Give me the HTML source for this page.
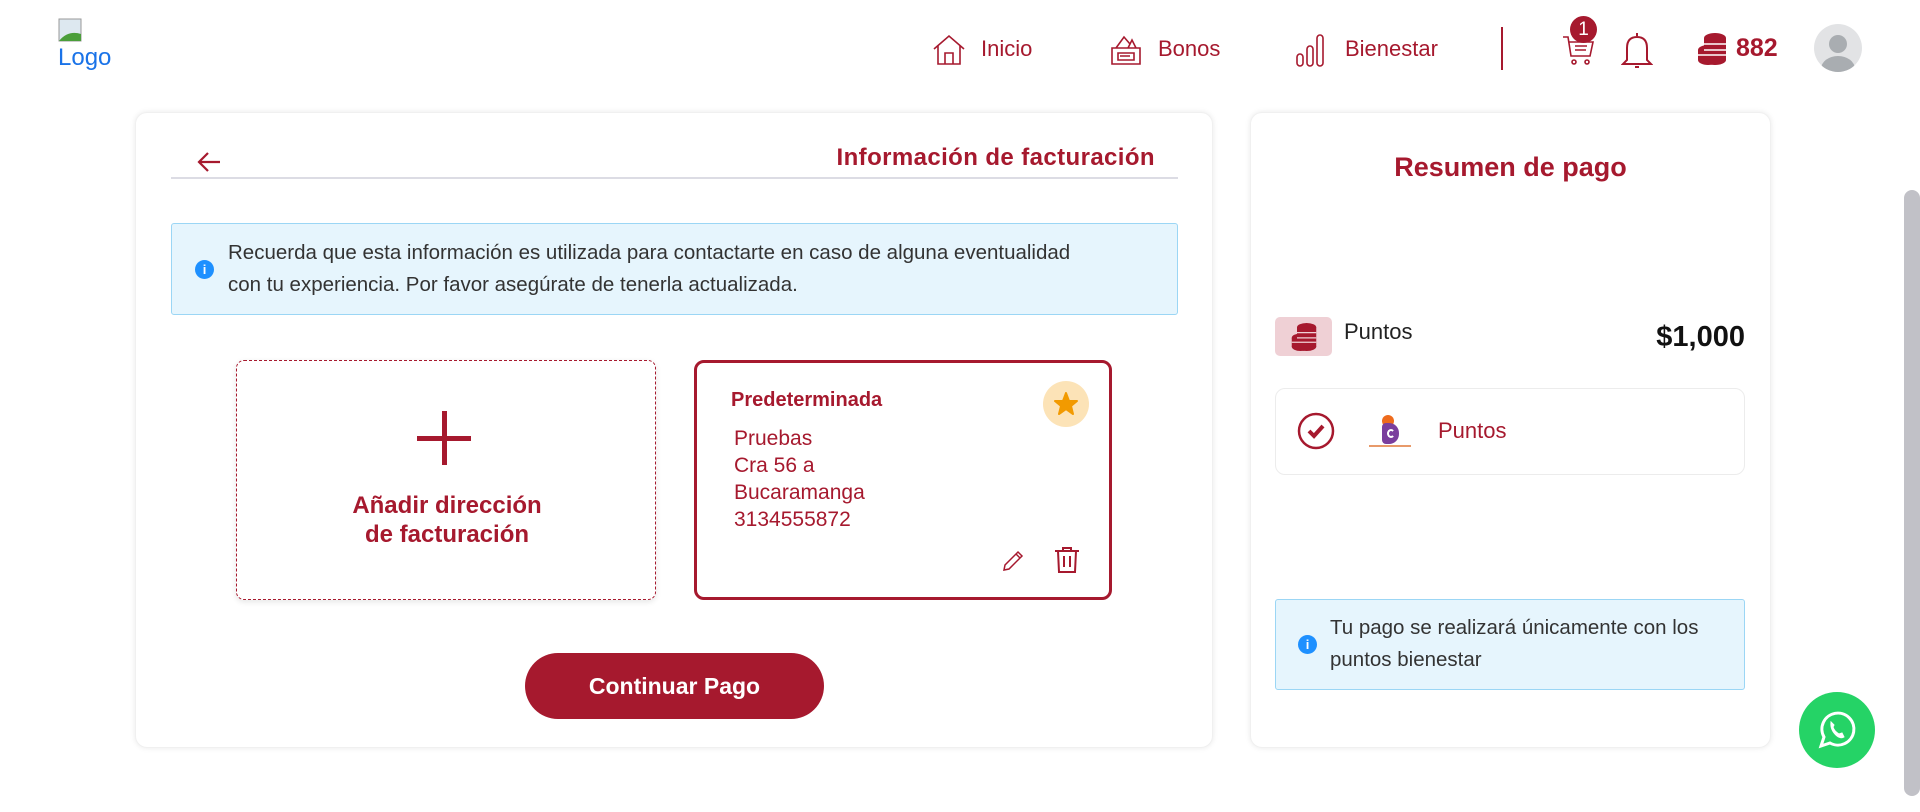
<!DOCTYPE html>
<html><head><meta charset="utf-8"><style>
*{box-sizing:border-box;margin:0;padding:0}
body{width:1920px;height:812px;overflow:hidden;background:#fff;font-family:"Liberation Sans",sans-serif;color:#a6192e;position:relative}
.a{position:absolute}
.card{position:absolute;background:#fff;border-radius:12px;box-shadow:0 0 6px rgba(0,0,0,.09);border:1px solid #f0f0f0}
.nav{font-size:22px;color:#a6192e}
.info{position:absolute;background:#e6f5fd;border:1px solid #9bd6f5;border-radius:3px;color:#333;font-size:20.5px;line-height:32px}
.ii{position:absolute;width:19px;height:19px;border-radius:50%;background:#1e90ff;color:#fff;font-size:13px;font-weight:bold;text-align:center;line-height:19px}
</style></head><body>
<svg class="a" style="left:58px;top:18px" width="24" height="24"><rect x="1" y="1" width="22" height="22" fill="#dde8f0" stroke="#999"/><path d="M1 23 Q10 12 23 16 V23Z" fill="#4a9e3a"/></svg>
<div class="a" style="left:58px;top:44px;font-size:24px;color:#1a73e8">Logo</div>

<svg class="a" style="left:932px;top:33px" width="34" height="34" viewBox="0 0 34 34" fill="none" stroke="#a6192e" stroke-width="1.6"><path d="M2 16 L17 3 L32 16 M6 13 V31 H28 V13 M13 31 V20 H21 V31"/></svg>
<div class="a nav" style="left:981px;top:36px">Inicio</div>
<svg class="a" style="left:1108px;top:34px" width="36" height="32" viewBox="0 0 36 32" fill="none" stroke="#a6192e" stroke-width="1.6"><path d="M4 14 H32 V30 H4Z M10 19 H26 V26 H10Z M12 22 H22 M8 14 L16 3 L22 10 M20 14 L24 6 L28 14"/></svg>
<div class="a nav" style="left:1158px;top:36px">Bonos</div>
<svg class="a" style="left:1295px;top:32px" width="32" height="36" viewBox="0 0 32 36" fill="none" stroke="#a6192e" stroke-width="1.6"><rect x="2" y="22" width="6" height="12" rx="3"/><rect x="12" y="14" width="6" height="20" rx="3"/><rect x="22" y="3" width="6" height="31" rx="3"/></svg>
<div class="a nav" style="left:1345px;top:36px">Bienestar</div>
<div class="a" style="left:1501px;top:27px;width:2px;height:43px;background:#a6192e"></div>
<svg class="a" style="left:1562px;top:34px" width="34" height="32" viewBox="0 0 34 32" fill="none" stroke="#a6192e" stroke-width="1.6"><path d="M1 3 H6 L9 22 H28 L31 8 H7 M13 12 H25 M13 16 H24"/><circle cx="12" cy="28" r="2"/><circle cx="25" cy="28" r="2"/></svg>
<div class="a" style="left:1570px;top:16px;width:27px;height:27px;border-radius:50%;background:#a6192e;color:#fff;font-size:19px;text-align:center;line-height:27px">1</div>
<svg class="a" style="left:1621px;top:30px" width="32" height="40" viewBox="0 0 32 40" fill="none" stroke="#a6192e" stroke-width="2"><path d="M16 3 V6 M6 30 V18 Q6 7 16 7 Q26 7 26 18 V30 L30 34 H2 L6 30Z M14 37 H18"/></svg>
<svg class="a" style="left:1696px;top:32px" width="32" height="34" viewBox="0 0 32 34" fill="#a6192e"><ellipse cx="19" cy="6" rx="11" ry="5"/><rect x="8" y="6" width="22" height="22"/><ellipse cx="19" cy="28" rx="11" ry="5"/><ellipse cx="12" cy="18" rx="10" ry="5"/><rect x="2" y="18" width="20" height="10"/><ellipse cx="12" cy="28" rx="10" ry="5"/><path d="M8 12 H30 M8 18 H30 M2 23 H30" stroke="#fff" stroke-width="1.5"/></svg>
<div class="a" style="left:1736px;top:34px;font-size:25px;font-weight:bold">882</div>
<div class="a" style="left:1814px;top:24px;width:48px;height:48px;border-radius:50%;background:#e2e3e5;overflow:hidden"><div class="a" style="left:15px;top:11px;width:18px;height:18px;border-radius:50%;background:#a9adb1"></div><div class="a" style="left:7px;top:32px;width:34px;height:26px;border-radius:50%;background:#a9adb1"></div></div>

<div class="card" style="left:135px;top:112px;width:1078px;height:636px"></div>
<svg class="a" style="left:196px;top:150px" width="26" height="24" viewBox="0 0 26 24" fill="none" stroke="#a6192e" stroke-width="2.2"><path d="M24 12 H3 M12 3 L3 12 L12 21"/></svg>
<div class="a" style="left:700px;width:455px;text-align:right;top:144px;font-size:24px;font-weight:bold;color:#a6192e;letter-spacing:0.4px">Información de facturación</div>
<div class="a" style="left:171px;top:177px;width:1007px;height:2px;background:#dcdce4"></div>
<div class="info" style="left:171px;top:223px;width:1007px;height:92px;padding:13px 0 0 56px">Recuerda que esta información es utilizada para contactarte en caso de alguna eventualidad<br>con tu experiencia. Por favor asegúrate de tenerla actualizada.</div>
<div class="ii" style="left:195px;top:260px">i</div>

<div class="a" style="left:236px;top:360px;width:420px;height:240px;border:1px dashed #a6192e;border-radius:8px;box-shadow:0 2px 6px rgba(0,0,0,.1);text-align:center">
<div class="a" style="left:180px;top:75px;width:54px;height:5px;background:#a6192e"></div>
<div class="a" style="left:205px;top:50px;width:5px;height:54px;background:#a6192e"></div>
<div class="a" style="left:0;width:420px;top:130px;font-size:24px;line-height:29px;font-weight:bold;color:#a6192e">Añadir dirección<br>de facturación</div>
</div>

<div class="a" style="left:694px;top:360px;width:418px;height:240px;border:3px solid #a6192e;border-radius:10px">
<div class="a" style="left:34px;top:26px;font-size:20px;font-weight:bold">Predeterminada</div>
<div class="a" style="left:346px;top:18px;width:46px;height:46px;border-radius:50%;background:#fce3b7"></div>
<svg class="a" style="left:357px;top:29px" width="24" height="24" viewBox="0 0 24 24"><path d="M12 1 L15 9 L23 9 L17 14 L19 22 L12 17 L5 22 L7 14 L1 9 L9 9Z" fill="#f29a00" stroke="#f29a00" stroke-linejoin="round" stroke-width="2"/></svg>
<div class="a" style="left:37px;top:62px;font-size:21px;line-height:27px;color:#a6192e">Pruebas<br>Cra 56 a<br>Bucaramanga<br>3134555872</div>
<svg class="a" style="left:305px;top:187px" width="22" height="22" viewBox="0 0 22 22" fill="none" stroke="#a6192e" stroke-width="1.5"><path d="M2 20 L3 15 L16 2 L20 6 L7 19Z M14 4 L18 8"/></svg>
<svg class="a" style="left:357px;top:183px" width="26" height="28" viewBox="0 0 26 28" fill="none" stroke="#a6192e" stroke-width="2"><path d="M1 5 H25 M9 5 V2 H17 V5 M4 5 L5 26 H21 L22 5 M10 10 V21 M16 10 V21"/></svg>
</div>

<div class="a" style="left:525px;top:653px;width:299px;height:66px;border-radius:33px;background:#a6192e;color:#fff;font-size:23px;font-weight:bold;text-align:center;line-height:66px">Continuar Pago</div>

<div class="card" style="left:1250px;top:112px;width:521px;height:636px"></div>
<div class="a" style="left:1250px;width:521px;text-align:center;top:152px;font-size:27px;font-weight:bold;color:#a6192e">Resumen de pago</div>
<div class="a" style="left:1275px;top:317px;width:57px;height:39px;border-radius:5px;background:#efd0d5"></div>
<svg class="a" style="left:1290px;top:322px" width="28" height="30" viewBox="0 0 32 34" fill="#a6192e"><ellipse cx="19" cy="6" rx="11" ry="5"/><rect x="8" y="6" width="22" height="22"/><ellipse cx="19" cy="28" rx="11" ry="5"/><ellipse cx="12" cy="18" rx="10" ry="5"/><rect x="2" y="18" width="20" height="10"/><ellipse cx="12" cy="28" rx="10" ry="5"/><path d="M8 12 H30 M8 18 H30 M2 23 H30" stroke="#efd0d5" stroke-width="1.5"/></svg>
<div class="a" style="left:1344px;top:319px;font-size:22px;color:#222">Puntos</div>
<div class="a" style="left:1545px;width:200px;text-align:right;top:321px;font-size:29px;font-weight:bold;color:#111">$1,000</div>
<div class="a" style="left:1275px;top:388px;width:470px;height:87px;border:1px solid #ececec;border-radius:10px"></div>
<svg class="a" style="left:1297px;top:412px" width="38" height="38" viewBox="0 0 38 38" fill="none" stroke="#a6192e"><circle cx="19" cy="19" r="17" stroke-width="2.5"/><path d="M12 19 L17 24 L26 14" stroke-width="4"/></svg>
<div class="a" style="left:1382px;top:415px;width:12px;height:12px;border-radius:50%;background:#ee6b1c"></div>
<div class="a" style="left:1382px;top:423px;width:17px;height:21px;border-radius:4px 10px 10px 4px;background:#7a3e9d"></div>
<div class="a" style="left:1387px;top:429px;width:8px;height:9px;border-radius:50%;border:2px solid #fff;border-right-color:transparent"></div>
<div class="a" style="left:1369px;top:445px;width:42px;height:2px;background:#e89a6a"></div>
<div class="a" style="left:1438px;top:418px;font-size:22px;color:#a6192e">Puntos</div>
<div class="info" style="left:1275px;top:599px;width:470px;height:91px;padding:12px 0 0 54px;font-size:20.5px">Tu pago se realizará únicamente con los<br>puntos bienestar</div>
<div class="ii" style="left:1298px;top:635px">i</div>

<div class="a" style="left:1799px;top:692px;width:76px;height:76px;border-radius:50%;background:#25d366"></div>
<svg class="a" style="left:1815px;top:708px" width="44" height="44" viewBox="0 0 44 44" fill="none" stroke="#fff" stroke-width="3"><path d="M6 38 L9 29 A16 16 0 1 1 15 35 Z"/><path d="M16 14 Q15 22 22 28 Q26 31 29 29 L27 25 L24 26 Q19 23 18 19 L19 17 Z" fill="#fff" stroke-width="1"/></svg>

<div class="a" style="left:1904px;top:190px;width:16px;height:606px;border-radius:8px;background:#c1c1c7"></div>
</body></html>
